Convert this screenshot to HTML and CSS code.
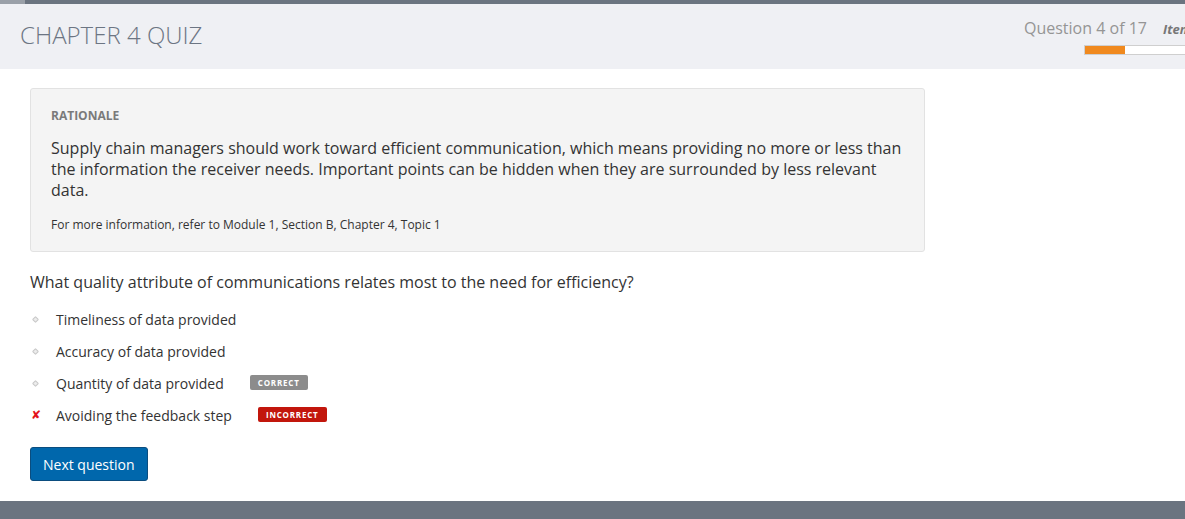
FILE: index.html
```html
<!DOCTYPE html>
<html lang="en">
<head>
<meta charset="utf-8">
<title>Chapter 4 Quiz</title>
<link rel="stylesheet" href="styles.css">
</head>
<body>
<div class="topbar"><span class="topbar-seg"></span></div>
<header class="header">
  <h1 class="title">CHAPTER 4 QUIZ</h1>
  <div class="status">
    <div class="status-row">
      <span class="qcount">Question 4 of 17</span>
      <span class="item">Item</span>
    </div>
    <div class="progress"><div class="progress-fill" style="width:40px"></div></div>
  </div>
</header>
<main class="content">
  <section class="rationale">
    <h2 class="rationale-title">RATIONALE</h2>
    <p class="rationale-text">Supply chain managers should work toward efficient communication, which means providing no more or less than the information the receiver needs. Important points can be hidden when they are surrounded by less relevant data.</p>
    <p class="rationale-ref">For more information, refer to Module 1, Section B, Chapter 4, Topic 1</p>
  </section>
  <p class="question">What quality attribute of communications relates most to the need for efficiency?</p>
  <ul class="options">
    <li class="option"><span class="mark"><span class="dot"></span></span><span class="opt-text">Timeliness of data provided</span></li>
    <li class="option"><span class="mark"><span class="dot"></span></span><span class="opt-text">Accuracy of data provided</span></li>
    <li class="option"><span class="mark"><span class="dot"></span></span><span class="opt-text">Quantity of data provided</span><span class="badge badge-correct">CORRECT</span></li>
    <li class="option"><span class="mark"><span class="cross">✘</span></span><span class="opt-text">Avoiding the feedback step</span><span class="badge badge-incorrect">INCORRECT</span></li>
  </ul>
  <button class="btn">Next question</button>
</main>
<footer class="footer"></footer>
</body>
</html>
```
FILE: styles.css
```css
* { box-sizing: border-box; }
html, body { margin: 0; padding: 0; }
body {
  font-family: "Open Sans", "Liberation Sans", sans-serif;
  color: #333;
  background: #fff;
  overflow: hidden;
}
.topbar {
  height: 4px;
  background: #6b7480;
  display: flex;
}
.topbar-seg {
  width: 25px;
  background: #9aa0a8;
}
.header {
  height: 65px;
  background: #eff0f4;
  display: flex;
  justify-content: space-between;
  padding-left: 20px;
}
.title {
  margin: 0;
  padding-top: 14px;
  font-size: 24px;
  line-height: 34px;
  font-weight: 300;
  color: #6c7583;
}
.status {
  padding-top: 13px;
  width: 161px;
  flex-shrink: 0;
  overflow: hidden;
}
.status-row {
  display: flex;
  align-items: baseline;
  white-space: nowrap;
  height: 22px;
}
.qcount {
  font-size: 16px;
  line-height: 22px;
  color: #959595;
}
.item {
  margin-left: 16px;
  font-size: 13px;
  font-style: italic;
  font-weight: 700;
  color: #777;
}
.progress {
  margin-top: 6px;
  margin-left: 60px;
  height: 10px;
  border: 1px solid #cfcfcf;
  border-right: none;
  background: #fff;
  width: 120px;
}
.progress-fill {
  height: 100%;
  background: #f0891e;
}
.content {
  padding: 19px 30px 20px 30px;
  width: 955px;
}
.rationale {
  background: #f4f4f4;
  border: 1px solid #e2e2e2;
  border-radius: 3px;
  padding: 19px 20px 18px 20px;
}
.rationale-title {
  margin: 0;
  font-size: 12px;
  line-height: 16px;
  font-weight: 700;
  color: #7a7a7a;
}
.rationale-text {
  margin: 14px 0 0 0;
  font-size: 16px;
  line-height: 21px;
  color: #333;
}
.rationale-ref {
  margin: 16px 0 0 0;
  font-size: 12px;
  line-height: 16px;
  color: #333;
}
.question {
  margin: 19px 0 0 0;
  font-size: 16px;
  line-height: 22px;
  color: #333;
  white-space: nowrap;
}
.options {
  list-style: none;
  margin: 10px 0 0 0;
  padding: 0;
}
.option {
  display: flex;
  align-items: center;
  height: 32px;
  font-size: 14px;
}
.mark {
  width: 26px;
  display: flex;
  align-items: center;
  padding-left: 3px;
}
.dot {
  width: 5px;
  height: 5px;
  border-radius: 1px;
  transform: rotate(45deg);
  background: #ececec;
  border: 1px solid #c8c8c8;
}
.cross {
  color: #e3121b;
  font-size: 12px;
  line-height: 1;
  margin-left: -2px;
  font-family: "DejaVu Sans", sans-serif;
}
.opt-text {
  color: #333;
}
.badge {
  margin-left: 26px;
  height: 15px;
  padding: 0 8px;
  border-radius: 2px;
  font-size: 8px;
  font-weight: 700;
  letter-spacing: 0.8px;
  color: #fff;
  display: inline-flex;
  align-items: center;
  margin-top: -1px;
}
.badge-correct { background: #8c8c8c; }
.badge-incorrect { background: #c2160c; }
.btn {
  margin-top: 16px;
  height: 34px;
  padding: 0 12px;
  background: #0067ac;
  border: 1px solid #0b4d7f;
  border-radius: 3px;
  color: #fff;
  font-family: "Open Sans", "Liberation Sans", sans-serif;
  font-size: 14px;
  cursor: pointer;
}
.footer {
  height: 40px;
  background: #6b7480;
}
```
